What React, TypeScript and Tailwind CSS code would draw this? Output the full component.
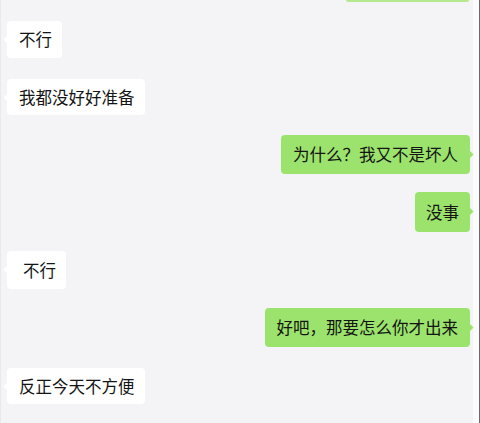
import React from "react";

type Msg = { id: number; text: string; mine: boolean; top: string; h: string; pad: string };

const messages: Msg[] = [
  { id: 1, text: "不行", mine: false, top: "mt-[19px]", h: "h-[37px]", pad: "pl-3 pr-[10px]" },
  { id: 2, text: "我都没好好准备", mine: false, top: "mt-[21px]", h: "h-[36px]", pad: "pl-3 pr-[10px]" },
  { id: 3, text: "为什么？我又不是坏人", mine: true, top: "mt-[20px]", h: "h-[39px]", pad: "px-3" },
  { id: 4, text: "没事", mine: true, top: "mt-[18px]", h: "h-[40px]", pad: "px-[11px]" },
  { id: 5, text: "不行", mine: false, top: "mt-[19px]", h: "h-[38px]", pad: "pl-4 pr-[10px]" },
  { id: 6, text: "好吧，那要怎么你才出来", mine: true, top: "mt-[19px]", h: "h-[39px]", pad: "px-3" },
  { id: 7, text: "反正今天不方便", mine: false, top: "mt-[21px]", h: "h-[36px]", pad: "pl-3 pr-[10px]" },
];

function Bubble({ m }: { m: Msg }) {
  return (
    <div className={`flex ${m.mine ? "justify-end pr-[3px]" : "justify-start pl-[6px]"} ${m.top}`}>
      <div
        className={`relative flex items-center rounded-[4px] ${m.h} ${m.pad} ${
          m.mine ? "bg-[#9be36c]" : "bg-white"
        }`}
      >
        {/* tail */}
        {m.mine ? (
          <svg className="absolute right-[-4px] top-[15px]" width="5" height="9" viewBox="0 0 5 9">
            <path d="M0 0 L4.5 4.5 L0 9 Z" fill="#9be36c" />
          </svg>
        ) : (
          <svg className="absolute left-[-4px] top-[14px]" width="5" height="9" viewBox="0 0 5 9">
            <path d="M5 0 L0.5 4.5 L5 9 Z" fill="#ffffff" />
          </svg>
        )}
        <span className="text-[16.5px] leading-none text-[#141414] whitespace-nowrap">{m.text}</span>
      </div>
    </div>
  );
}

export default function App() {
  return (
    <div
      className="flex w-[480px] h-[423px] overflow-hidden bg-[#f4f3f6]"
      style={{ fontFamily: '"Noto Sans CJK SC", "Noto Sans", sans-serif' }}
    >
      <div className="flex-1 flex flex-col border-l border-[#e9e8ec]">
        {/* previous message, cut off at the top */}
        <div className="flex justify-end pr-[4px]">
          <div className="w-[123px] h-[2px] rounded-b-[3px] bg-[#b5e98f]" />
        </div>
        {messages.map((m) => (
          <Bubble key={m.id} m={m} />
        ))}
      </div>
      <div className="w-[6px] bg-[#fbfbfc]" />
      <div className="w-[1px] bg-[#6b6b6e]" />
    </div>
  );
}
